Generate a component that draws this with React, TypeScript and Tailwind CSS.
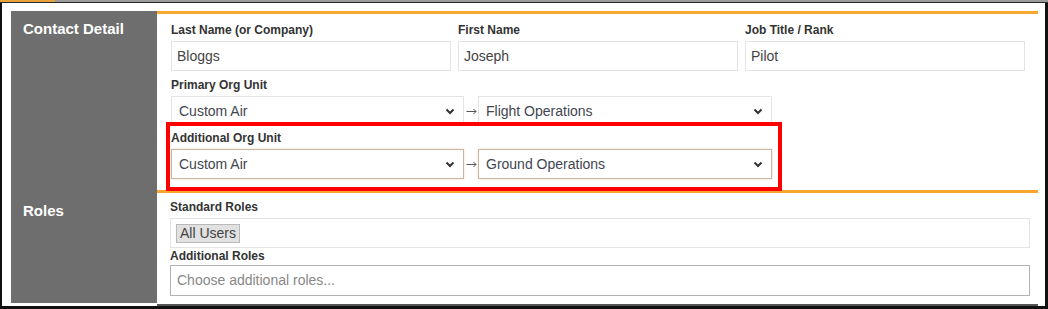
import React from "react";

const font = { fontFamily: '"Liberation Sans", Arial, sans-serif' };

function Chevron() {
  return (
    <svg width="10" height="7" viewBox="0 0 10 7" className="shrink-0">
      <polyline points="1.5,1.5 5,5 8.5,1.5" fill="none" stroke="#333" strokeWidth="2" />
    </svg>
  );
}

function Arrow() {
  return (
    <div className="w-[14px] flex justify-center items-center">
      <svg width="11" height="7" viewBox="0 0 11 7">
        <line x1="0.5" y1="3.5" x2="10" y2="3.5" stroke="#555" strokeWidth="1" />
        <polyline points="7.5,1 10,3.5 7.5,6" fill="none" stroke="#555" strokeWidth="1" />
      </svg>
    </div>
  );
}

function Label({ children }: { children: React.ReactNode }) {
  return <div className="text-[12px] leading-[16px] font-bold text-[#333]">{children}</div>;
}

function TextInput({ value }: { value: string }) {
  return (
    <div className="h-[30px] border border-[#e3e3e3] px-[5px] flex items-center text-[14px] text-[#444]">{value}</div>
  );
}

function Select({ value, w, focus }: { value: string; w: string; focus?: boolean }) {
  return (
    <div
      className={
        "h-[30px] flex items-center justify-between pl-[7px] pr-[8px] text-[14px] text-[#3f4650] " +
        w +
        (focus ? " border border-[#c9b6a2] shadow-[0_0_2px_#f3d9bf]" : " border border-[#e3e3e3]")
      }
    >
      <span>{value}</span>
      <Chevron />
    </div>
  );
}

function OrgRow({ a, b, focus }: { a: string; b: string; focus?: boolean }) {
  return (
    <div className="flex items-center">
      <Select value={a} w="w-[293px]" focus={focus} />
      <Arrow />
      <Select value={b} w="w-[294px]" focus={focus} />
    </div>
  );
}

export default function App() {
  return (
    <div style={font} className="w-[1048px] h-[309px] bg-[#111] flex flex-col overflow-hidden">
      <div className="h-[2px] flex shrink-0">
        <div className="w-[55px] bg-[#e8a23a]" />
        <div className="flex-1 bg-[#9a9a9a]" />
      </div>
      <div className="h-[1px] bg-[#2a2a2a] shrink-0" />
      <div className="flex-1 ml-[2px] mr-[3px] mb-[3px] bg-white pt-[8px] pl-[9px] pr-[7px] flex flex-col">
        <div className="flex flex-1">
          <div className="w-[146px] bg-[#6e6e6e] flex flex-col text-white font-bold text-[15px]">
            <div className="h-[179px] pl-[12px] pt-[7px]">Contact Detail</div>
            <div className="pl-[12px] pt-[10px]">Roles</div>
          </div>
          <div className="flex-1 flex flex-col">
            <div className="h-[179px] border-t-[3px] border-[#f8a72e] pl-[14px] pr-[13px] pt-[8px]">
              <div className="grid grid-cols-3 gap-x-[7px]">
                {[
                  ["Last Name (or Company)", "Bloggs"],
                  ["First Name", "Joseph"],
                  ["Job Title / Rank", "Pilot"],
                ].map(([l, v]) => (
                  <div key={l} className="flex flex-col gap-[3px]">
                    <Label>{l}</Label>
                    <TextInput value={v} />
                  </div>
                ))}
              </div>
              <div className="mt-[6px] flex flex-col gap-[3px]">
                <Label>Primary Org Unit</Label>
                <OrgRow a="Custom Air" b="Flight Operations" />
              </div>
              <div className="relative mt-[4px] flex flex-col gap-[3px]">
                <div className="absolute left-[-5px] top-[-8px] w-[616px] h-[69px] border-[4px] border-[#ff0000]" />
                <Label>Additional Org Unit</Label>
                <OrgRow a="Custom Air" b="Ground Operations" focus />
              </div>
            </div>
            <div className="flex-1 border-t-[3px] border-[#f8a72e] pl-[13px] pr-[8px] pt-[6px]">
              <Label>Standard Roles</Label>
              <div className="mt-[3px] h-[30px] border border-[#e3e3e3] flex items-center pl-[5px]">
                <span className="h-[19px] px-[3px] flex items-center bg-[#e1e1e1] border border-[#b9b9b9] text-[14px] text-[#444]">
                  All Users
                </span>
              </div>
              <Label>Additional Roles</Label>
              <div className="mt-[1px] h-[31px] border border-[#b3b3b3] flex items-center pl-[6px] text-[14px] text-[#888]">
                Choose additional roles...
              </div>
            </div>
          </div>
        </div>
        <div className="h-[1px] bg-white" />
        <div className="h-[2px] ml-[146px] mr-[0px] bg-[#555]" />
      </div>
    </div>
  );
}
